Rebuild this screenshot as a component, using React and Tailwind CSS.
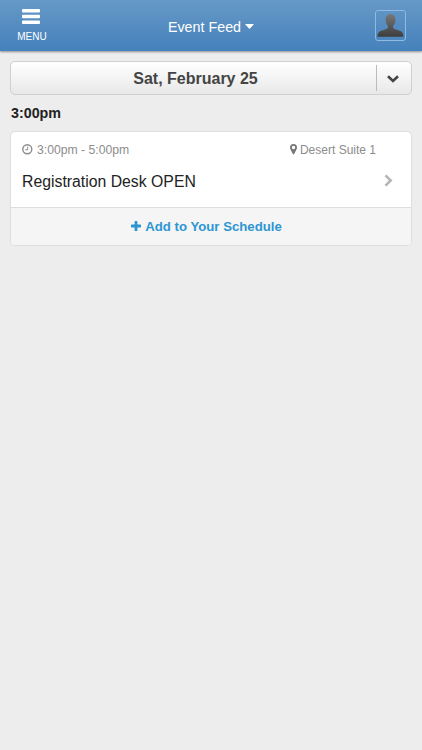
export default function App() {
  return (
    <div className="h-[750px] w-full overflow-hidden bg-[#ededed] font-['Liberation_Sans',Arial,sans-serif] text-[#222]">
      <Header />
      <main className="px-2.5 pt-2.5">
        <DatePicker date="Sat, February 25" />
        <h2 className="mt-[7px] h-[22px] pl-px text-[14.3px] leading-[23px] font-bold">
          3:00pm
        </h2>
        <EventCard
          time="3:00pm - 5:00pm"
          location="Desert Suite 1"
          title="Registration Desk OPEN"
        />
      </main>
    </div>
  );
}

function Header() {
  return (
    <header className="grid h-[51px] grid-cols-[64px_1fr_64px] bg-linear-to-b from-[#6699c7] to-[#4581bb] text-white shadow-[0_1px_2px_rgba(0,0,0,0.4)]">
      <button className="flex flex-col items-center pt-[9px]">
        <BarsIcon />
        <span className="mt-1.5 text-[10px] leading-3">MENU</span>
      </button>
      <button className="flex items-center justify-center gap-1 pt-[5px] text-[14.3px]">
        <span>Event Feed</span>
        <svg width="9" height="5" viewBox="0 0 9 5" className="-mt-1">
          <path d="M.8 0h7.4q.9.1.3.8L5 4.6q-.5.5-1 0L.5.8Q-.1.1.8 0z" fill="#fff" />
        </svg>
      </button>
      <div className="flex justify-end pt-2.5 pr-4">
        <Avatar />
      </div>
    </header>
  );
}

function Avatar() {
  return (
    <div className="flex h-[31px] w-[31px] items-end justify-center rounded-[3px] border border-[#8fbbe3] pb-[3px]">
      <svg width="27" height="23" viewBox="0 0 27 23">
        <defs>
          <linearGradient id="person" x1="0" y1="0" x2="0" y2="1">
            <stop offset="0" stopColor="#777" />
            <stop offset="1" stopColor="#3d3d3d" />
          </linearGradient>
        </defs>
        <path
          d="M13.500.3c3 0 4.900 2 4.900 5.200 0 2.800-.9 5-2.300 6.300v2c1 1.500 3.500 1.900 6 2.700 3 1 4.200 2.500 4.400 6.300H.5c.2-3.800 1.400-5.300 4.400-6.300 2.500-.8 5-1.200 6-2.700v-2C9.500 10.500 8.600 8.300 8.600 5.500c0-3.200 1.900-5.200 4.900-5.200z"
          fill="url(#person)"
        />
      </svg>
    </div>
  );
}

function DatePicker({ date }) {
  return (
    <button className="flex h-[34px] w-full items-center rounded-[5px] border border-[#d0d0d0] bg-linear-to-b from-white to-[#e8e8e8]">
      <span className="flex-1 pt-0.5 pl-1 text-center text-[16px] font-bold text-[#444]">
        {date}
      </span>
      <span className="flex h-[26px] w-[35px] items-center justify-center border-l border-[#bbb]">
        <svg width="12" height="8" viewBox="0 0 12 8" className="mt-px -ml-0.5">
          <path d="m1 1.300 5 4.700 5-4.700" fill="none" stroke="#444" strokeWidth="2.600" />
        </svg>
      </span>
    </button>
  );
}

function EventCard({ time, location, title }) {
  return (
    <section className="mt-[7px] overflow-hidden rounded-[5px] border border-[#dedede] bg-white">
      <div className="h-[75px] pr-[18px] pl-[11px]">
        <div className="flex justify-between pt-2.5 pr-[17px] text-[12.200px] leading-4 text-[#8c8c8c]">
          <span className="flex items-center gap-1">
            <ClockIcon />
            {time}
          </span>
          <span className="flex items-center gap-[3px] text-[12px]">
            <PinIcon />
            {location}
          </span>
        </div>
        <div className="mt-[13px] flex items-center justify-between">
          <h3 className="text-[15.800px] leading-[22px]">{title}</h3>
          <svg width="9" height="13" viewBox="0 0 9 13" className="-mt-[3px]">
            <path d="m1.500 1.300 5.200 5.200-5.200 5.200" fill="none" stroke="#b5b5b5" strokeWidth="2.600" />
          </svg>
        </div>
      </div>
      <button className="flex h-[38px] w-full items-center justify-center gap-1 border-t border-[#dedede] bg-[#f5f5f5] pr-[9px] text-[13.200px] font-bold text-[#2e95d3]">
        <PlusIcon />
        Add to Your Schedule
      </button>
    </section>
  );
}

function BarsIcon() {
  return (
    <svg width="18" height="16" viewBox="0 0 18 16" fill="#fff" className="-ml-[3px]">
      <rect width="18" height="3.400" rx="0.900" />
      <rect y="5.800" width="18" height="3.400" rx="0.900" />
      <rect y="11.600" width="18" height="3.400" rx="0.900" />
    </svg>
  );
}

function ClockIcon() {
  return (
    <svg width="11" height="11" viewBox="0 0 11 11" fill="none" stroke="currentColor" className="-mt-px">
      <circle cx="5.300" cy="5.300" r="4.500" strokeWidth="1.400" />
      <path d="M5.700 2.600v3.200H3.200" strokeWidth="1" />
    </svg>
  );
}

function PinIcon() {
  return (
    <svg width="7" height="11" viewBox="0 0 7 11" fill="#777" className="-mt-px">
      <path
        fillRule="evenodd"
        d="M3.500 0A3.500 3.500 0 0 1 7 3.500c0 .6-.1 1-.3 1.400L4.200 10.100q-.7.9-1.400 0L.3 4.900C.1 4.500 0 4.100 0 3.500A3.500 3.500 0 0 1 3.500 0zm0 1.800a1.700 1.700 0 1 0 0 3.400 1.700 1.700 0 0 0 0-3.400z"
      />
    </svg>
  );
}

function PlusIcon() {
  return (
    <svg width="10" height="10" viewBox="0 0 10 10" fill="currentColor" className="-mt-0.5">
      <path d="M4.200 0h1.600q.6 0 .6.600v3h3q.6 0 .6.600v1.600q0 .6-.6.600h-3v3q0 .6-.6.600H4.200q-.6 0-.6-.6v-3h-3Q0 6.400 0 5.800V4.200q0-.6.600-.6h3v-3q0-.6.600-.6z" />
    </svg>
  );
}
